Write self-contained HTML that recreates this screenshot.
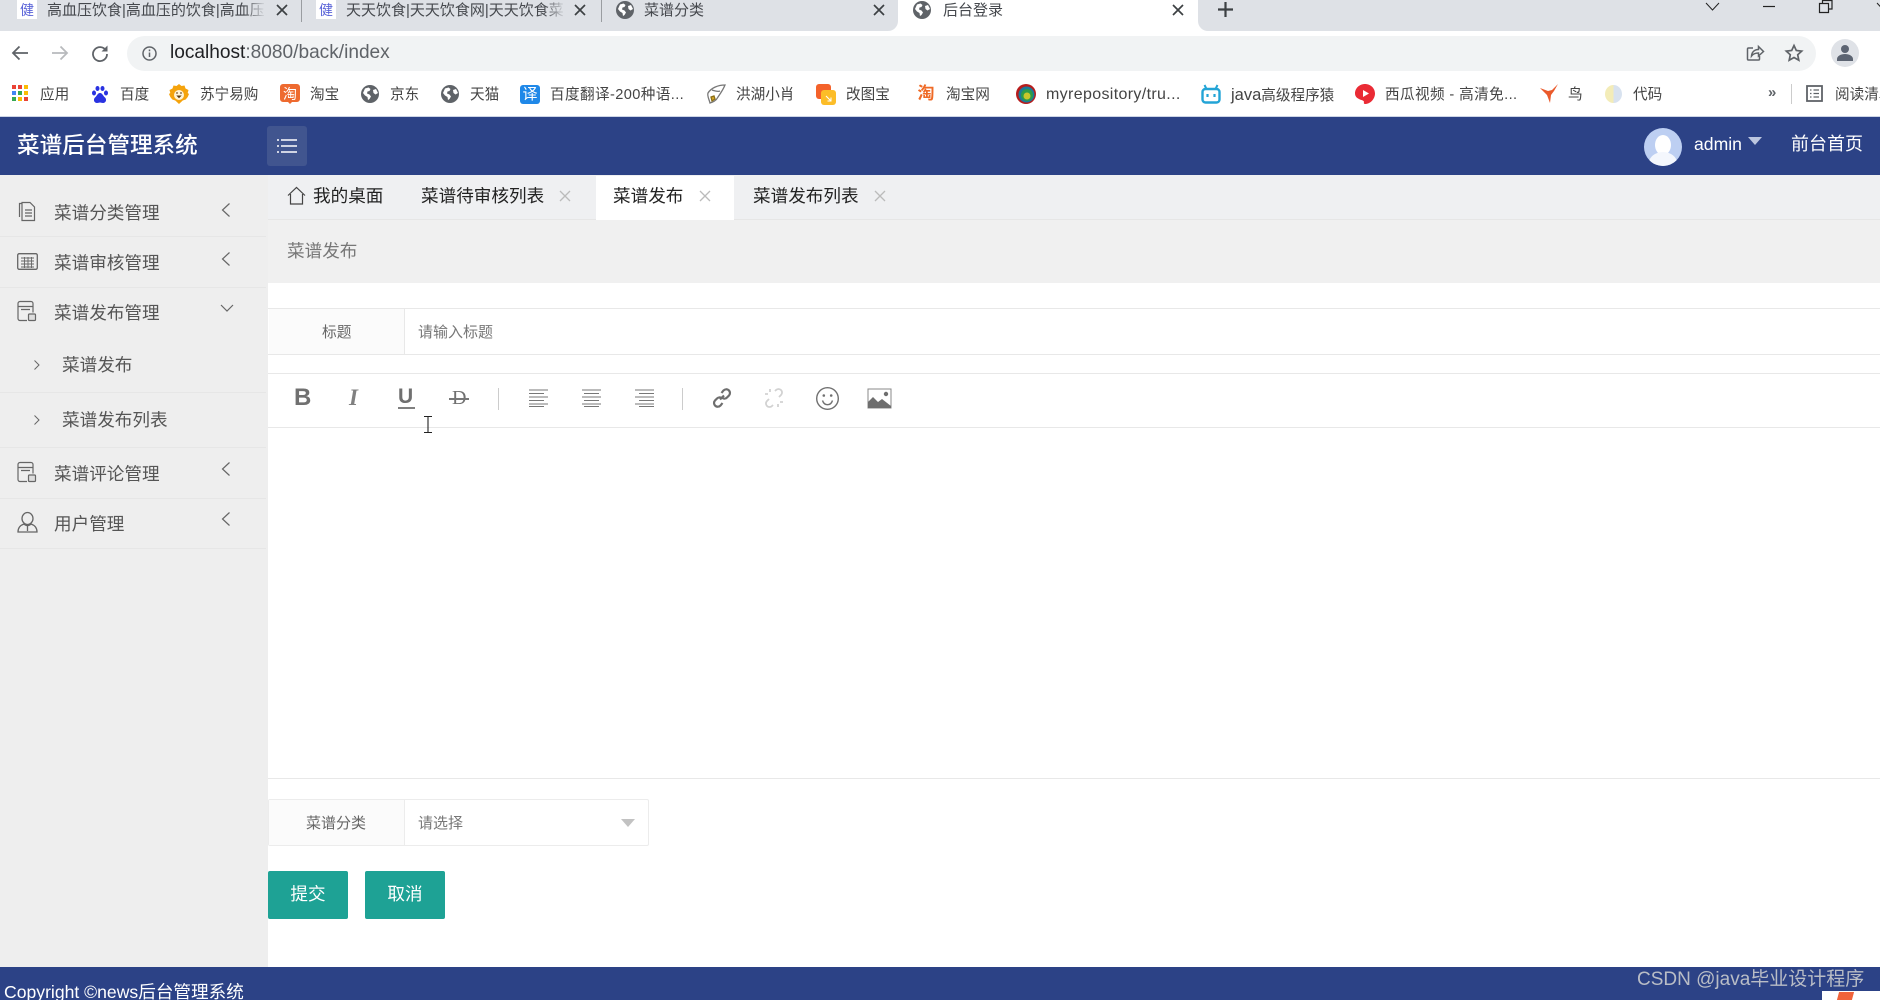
<!DOCTYPE html>
<html lang="zh-CN">
<head>
<meta charset="utf-8">
<title>后台登录</title>
<style>
html,body{margin:0;padding:0;width:1880px;height:1000px;overflow:hidden;background:#fff}
body{position:relative;font-family:"Liberation Sans","Noto Sans CJK SC","WenQuanYi Zen Hei",sans-serif}
.a,.t,svg.i{position:absolute}
.t{white-space:nowrap;line-height:24px;height:24px}
.bm{font-size:14.6px;color:#444;top:83px}
.tb{font-size:15px;color:#45484d;top:-1px}
.side{font-size:17.6px;color:#555}
.tab{font-size:17.6px;color:#222;top:184px}
svg.i{overflow:visible}
</style>
</head>
<body>
<svg width="0" height="0" style="position:absolute">
<defs>
<symbol id="globe" viewBox="0 0 18 18"><circle cx="9" cy="9" r="9" fill="#5f6368"/><path d="M4 3.500l3.500-1 2 1.500-1 2-2 .5-.5 2 2.500 1 1.500 2-1.500 2.500-1.500 1-.5-3-2.500-1.500-2-2.500zM12 5l3-1 2 4-2.500 1.500-2-1.500z" fill="#fff"/></symbol>
<symbol id="left" viewBox="0 0 12 16"><path d="M9.500 1.500L2.500 8l7 6.500" fill="none" stroke="#666" stroke-width="1.200"/></symbol>
<symbol id="x" viewBox="0 0 12 12"><path d="M1 1l10 10M11 1L1 11" stroke="#bbb" stroke-width="1.300" fill="none"/></symbol>
<symbol id="xd" viewBox="0 0 12 12"><path d="M1 1l10 10M11 1L1 11" stroke="#3c4043" stroke-width="1.700" fill="none"/></symbol>
</defs>
</svg>

<!-- browser tab strip -->
<div class="a" style="left:0;top:0;width:1880px;height:31px;background:#dee1e6"></div>
<div class="a" style="left:898px;top:0;width:300px;height:31px;background:#fff"></div>
<div class="a" style="left:888px;top:21px;width:10px;height:10px;background:#fff"></div>
<div class="a" style="left:878px;top:11px;width:20px;height:20px;background:#dee1e6;border-bottom-right-radius:10px"></div>
<div class="a" style="left:1198px;top:11px;width:20px;height:20px;background:#fff"></div>
<div class="a" style="left:1198px;top:11px;width:20px;height:20px;background:#dee1e6;border-bottom-left-radius:10px"></div>
<div class="a" style="left:17px;top:0;width:20px;height:19px;background:#fff;color:#5a64d8;font-size:14px;line-height:21px;text-align:center">健</div>
<div class="t tb" style="left:47px;width:217px;overflow:hidden">高血压饮食|高血压的饮食|高血压</div>
<div class="a" style="left:244px;top:0;width:22px;height:22px;background:linear-gradient(90deg,rgba(222,225,230,0),#dee1e6)"></div>
<svg class="i" style="left:276px;top:4px" width="12" height="12"><use href="#xd"/></svg>
<div class="a" style="left:301px;top:0;width:1px;height:22px;background:#9a9da1"></div>
<div class="a" style="left:316px;top:0;width:20px;height:19px;background:#fff;color:#5a64d8;font-size:14px;line-height:21px;text-align:center">健</div>
<div class="t tb" style="left:346px;width:220px;overflow:hidden">天天饮食|天天饮食网|天天饮食菜</div>
<div class="a" style="left:544px;top:0;width:22px;height:22px;background:linear-gradient(90deg,rgba(222,225,230,0),#dee1e6)"></div>
<svg class="i" style="left:574px;top:4px" width="12" height="12"><use href="#xd"/></svg>
<div class="a" style="left:601px;top:0;width:1px;height:22px;background:#9a9da1"></div>
<svg class="i" style="left:616px;top:1px" width="18" height="18"><use href="#globe"/></svg>
<div class="t tb" style="left:644px">菜谱分类</div>
<svg class="i" style="left:873px;top:4px" width="12" height="12"><use href="#xd"/></svg>
<svg class="i" style="left:913px;top:1px" width="18" height="18"><use href="#globe"/></svg>
<div class="t tb" style="left:943px">后台登录</div>
<svg class="i" style="left:1172px;top:4px" width="12" height="12"><use href="#xd"/></svg>
<svg class="i" style="left:1218px;top:2px" width="15" height="15"><path d="M7.500 0v15M0 7.500h15" stroke="#3c4043" stroke-width="2.200"/></svg>
<svg class="i" style="left:1680px;top:0" width="200" height="31" fill="none" stroke="#222" stroke-width="1">
<path d="M26 3l6.500 7 6.500-7"/><path d="M83 6.500h12" stroke-width="1.200"/><path d="M139.500 3.500h9v9h-9zM142.500 3V.5h9.500v8.500h-3.500" stroke-width="1.200"/><path d="M197 3l6 6.500"/>
</svg>

<!-- address bar -->
<svg class="i" style="left:11px;top:44px" width="18" height="18" fill="none" stroke="#5f6368" stroke-width="1.800"><path d="M17 9H2M8.500 2.500L2 9l6.500 6.500"/></svg>
<svg class="i" style="left:51px;top:44px" width="18" height="18" fill="none" stroke="#b8babd" stroke-width="1.800"><path d="M1 9h15M9.500 2.500L16 9l-6.500 6.500"/></svg>
<svg class="i" style="left:91px;top:44px" width="18" height="18" fill="none" stroke="#5f6368" stroke-width="1.800"><path d="M15 6.500A7 7 0 1 0 16 10"/><path d="M16.500 1.500v6h-6" stroke="none" fill="#5f6368"/></svg>
<div class="a" style="left:127px;top:36px;width:1689px;height:35px;background:#f1f3f4;border-radius:18px"></div>
<svg class="i" style="left:142px;top:46px" width="15" height="15"><circle cx="7.500" cy="7.500" r="6.500" fill="none" stroke="#5f6368" stroke-width="1.500"/><path d="M7.500 6.500v4.500M7.500 3.500v1.800" stroke="#5f6368" stroke-width="1.500"/></svg>
<div class="t" style="left:170px;top:41px;font-size:19.100px;color:#202124">localhost<span style="color:#5f6368">:8080/back/index</span></div>
<svg class="i" style="left:1746px;top:44px" width="18" height="18" fill="none" stroke="#5f6368" stroke-width="1.500"><path d="M7 4H2.500a1 1 0 0 0-1 1v10a1 1 0 0 0 1 1h10a1 1 0 0 0 1-1v-3"/><path d="M5.500 12c.3-4 3-6.500 7-6.500V2.500l5 5-5 4.500V9c-3 0-5.500 1-7 3z"/></svg>
<svg class="i" style="left:1785px;top:44px" width="18" height="18" fill="none" stroke="#5f6368" stroke-width="1.700"><path d="M9 1.500l2.300 5 5.400.6-4 3.700 1.100 5.400L9 13.500l-4.800 2.700 1.100-5.400-4-3.700 5.400-.6z"/></svg>
<div class="a" style="left:1831px;top:39px;width:28px;height:28px;border-radius:50%;background:#dfe2e7"></div>
<svg class="i" style="left:1837px;top:45px" width="16" height="16" fill="#5c6472"><circle cx="8" cy="4" r="4"/><path d="M0 16v-2c0-3 4-5 8-5s8 2 8 5v2z"/></svg>

<!-- bookmarks -->
<svg class="i" style="left:12px;top:85px" width="16" height="16">
<rect x="0" y="0" width="4" height="4" fill="#ea4335"/><rect x="6" y="0" width="4" height="4" fill="#ea4335"/><rect x="12" y="0" width="4" height="4" fill="#fbbc04"/>
<rect x="0" y="6" width="4" height="4" fill="#4285f4"/><rect x="6" y="6" width="4" height="4" fill="#34a853"/><rect x="12" y="6" width="4" height="4" fill="#fbbc04"/>
<rect x="0" y="12" width="4" height="4" fill="#34a853"/><rect x="6" y="12" width="4" height="4" fill="#fbbc04"/><rect x="12" y="12" width="4" height="4" fill="#ea4335"/>
</svg>
<div class="t bm" style="left:40px">应用</div>
<svg class="i" style="left:92px;top:86px" width="16" height="18" fill="#2932e1"><ellipse cx="2" cy="7" rx="2" ry="2.500"/><ellipse cx="5.500" cy="2.500" rx="2" ry="2.500"/><ellipse cx="10.500" cy="2.500" rx="2" ry="2.500"/><ellipse cx="14" cy="7" rx="2" ry="2.500"/><path d="M8 7c-2.500 0-3 3-5 4.500C1 13.500 2 17 5 17c1.500 0 2-.5 3-.5s1.500.5 3 .5c3 0 4-3.500 2-5.500C11 10 10.500 7 8 7z"/></svg>
<div class="t bm" style="left:120px">百度</div>
<svg class="i" style="left:169px;top:84px" width="20" height="20"><path d="M10 0l2.500 2 3-.5 1 3 3 1.500-.8 3 1.300 1-1.300 3-2 2.500-3 1-3.700 3.500-3.700-3.500-3-1-2-2.500L0 10l1.300-1-.8-3 3-1.500 1-3 3 .5z" fill="#f5a30c"/><circle cx="10" cy="11" r="5" fill="#fff3d6"/><path d="M7 9h2M11 9h2M8.500 12h3l-1.500 1.500z" stroke="#5a3a10" stroke-width="1"/></svg>
<div class="t bm" style="left:200px">苏宁易购</div>
<svg class="i" style="left:280px;top:84px" width="20" height="20"><path d="M3 0h14a3 3 0 0 1 3 3v12a3 3 0 0 1-3 3h-5l-2 2-2-2H3a3 3 0 0 1-3-3V3a3 3 0 0 1 3-3z" fill="#ee6a2f"/><text x="10" y="15" font-size="14" fill="#fff" text-anchor="middle" font-family="Noto Sans CJK SC">淘</text></svg>
<div class="t bm" style="left:310px">淘宝</div>
<svg class="i" style="left:361px;top:85px" width="18" height="18"><use href="#globe"/></svg>
<div class="t bm" style="left:390px">京东</div>
<svg class="i" style="left:441px;top:85px" width="18" height="18"><use href="#globe"/></svg>
<div class="t bm" style="left:470px">天猫</div>
<div class="a" style="left:520px;top:85px;width:20px;height:19px;background:#1f88e8;border-radius:3px;color:#fff;font-size:15px;line-height:19px;text-align:center">译</div>
<div class="t bm" style="left:550px;letter-spacing:.4px">百度翻译-200种语...</div>
<svg class="i" style="left:706px;top:84px" width="20" height="20" fill="none" stroke="#777" stroke-width="1.300"><path d="M19 1C12 1 5 4 2 9c-1 3 1 6 2 10 3-1 6-2 8-6 2-3 5-7 7-12z"/><path d="M5 13l3-1 1 3-3 2z" fill="#d7a928" stroke="#8a6d15"/><path d="M6 6c3 1 6 2 8 1"/></svg>
<div class="t bm" style="left:736px">洪湖小肖</div>
<div class="a" style="left:816px;top:84px;width:15px;height:15px;background:#f4622a;border-radius:3px"></div>
<div class="a" style="left:821px;top:90px;width:15px;height:15px;background:#fcbd28;border-radius:3px"></div>
<svg class="i" style="left:825px;top:95px" width="8" height="8" fill="none" stroke="#fff" stroke-width="1"><path d="M1 1l5 5M6 2.500V6H2.500"/></svg>
<div class="t bm" style="left:846px">改图宝</div>
<div class="a" style="left:916px;top:84px;width:20px;height:20px;color:#ef6a26;font-size:17px;font-weight:700;line-height:20px;text-align:center">淘</div>
<div class="t bm" style="left:946px">淘宝网</div>
<svg class="i" style="left:1016px;top:84px" width="20" height="20"><circle cx="10" cy="10" r="10" fill="#b71c1c"/><circle cx="10.500" cy="10.500" r="8" fill="#1b7a9a"/><circle cx="11" cy="11" r="6" fill="#2e9b48"/><circle cx="11" cy="12" r="3.500" fill="#c7c62c"/></svg>
<div class="t bm" style="left:1046px;font-size:16px;letter-spacing:.35px">myrepository/tru...</div>
<svg class="i" style="left:1201px;top:84px" width="20" height="20" fill="none" stroke="#23a4d6" stroke-width="2.400"><rect x="1.500" y="5" width="17" height="13.500" rx="3"/><path d="M5.500 5L3.500 1M14.500 5l2-4" stroke-width="2"/><path d="M6.500 10v3M13.500 10v3" stroke-width="2.200"/></svg>
<div class="t bm" style="left:1231px"><span style="font-size:16.500px">java</span>高级程序猿</div>
<svg class="i" style="left:1355px;top:84px" width="20" height="20"><path d="M10 0c5.500 0 10 4.200 10 9.500S15.500 20 10 20c-1 0-1.500-1-1-2 0-1-1-1.500-2.500-2C3 15 0 13 0 9.500 0 4.200 4.500 0 10 0z" fill="#ea2b35"/><path d="M8 6l6 3.500-6 3.500z" fill="#fff"/></svg>
<div class="t bm" style="left:1385px;letter-spacing:.4px">西瓜视频 - 高清免...</div>
<svg class="i" style="left:1539px;top:84px" width="20" height="20"><path d="M19 0l-6 6-4 1L1 4l7 7 3 8 1-8 3-4z" fill="#ea5a2b"/></svg>
<div class="t bm" style="left:1568px">鸟</div>
<svg class="i" style="left:1605px;top:85px" width="17" height="18"><path d="M8.500 0a8.500 9 0 0 0 0 18z" fill="#f3ecb8"/><path d="M8.500 0a8.500 9 0 0 1 0 18z" fill="#d8e2ef"/></svg>
<div class="t bm" style="left:1633px">代码</div>
<div class="t" style="left:1768px;top:81px;font-size:15px;color:#5f6368;font-weight:700">»</div>
<div class="a" style="left:1791px;top:84px;width:1px;height:20px;background:#ccc"></div>
<svg class="i" style="left:1806px;top:85px" width="17" height="17" fill="none" stroke="#5f6368" stroke-width="1.800"><rect x="1" y="1" width="15" height="15"/><path d="M4 5h1.500M7.500 5H13M4 8.500h1.500M7.500 8.500H13M4 12h1.500M7.500 12H13" stroke-width="1.300"/></svg>
<div class="t bm" style="left:1835px;width:45px;overflow:hidden">阅读清单</div>

<!-- app header -->
<div class="a" style="left:0;top:116px;width:1880px;height:1px;background:#cdd5e6"></div>
<div class="a" style="left:0;top:117px;width:1880px;height:58px;background:#2c4286"></div>
<div class="t" style="left:17px;top:132px;font-size:22.600px;color:#fff;font-weight:500;height:24px;line-height:28px">菜谱后台管理系统</div>
<div class="a" style="left:267px;top:126px;width:40px;height:40px;background:#41558f;border-radius:3px"></div>
<svg class="i" style="left:277px;top:139px" width="20" height="14" stroke="#fff" stroke-width="1.400"><path d="M4 1h16M4 7h16M4 13h16"/><path d="M0 1h2M0 7h2M0 13h2"/></svg>
<div class="a" style="left:1644px;top:128px;width:38px;height:38px;border-radius:50%;background:#bdcff2;overflow:hidden"><div class="a" style="left:11px;top:7px;width:16px;height:20px;border-radius:50%;background:#fff"></div><div class="a" style="left:5px;top:24px;width:28px;height:22px;border-radius:50%;background:#f4f7fd"></div></div>
<div class="t" style="left:1694px;top:132px;font-size:17.600px;color:#fff">admin</div>
<div class="a" style="left:1748px;top:137px;width:0;height:0;border-left:7px solid transparent;border-right:7px solid transparent;border-top:8px solid #bcc6df"></div>
<div class="t" style="left:1791px;top:132px;font-size:18px;color:#fff">前台首页</div>

<!-- sidebar -->
<div class="a" style="left:0;top:175px;width:268px;height:792px;background:#eee"></div>
<div class="a" style="left:0;top:236px;width:266px;height:1px;background:#e6e6e6"></div>
<div class="a" style="left:0;top:287px;width:266px;height:1px;background:#e6e6e6"></div>
<div class="a" style="left:0;top:392px;width:266px;height:1px;background:#e6e6e6"></div>
<div class="a" style="left:0;top:447px;width:266px;height:1px;background:#e6e6e6"></div>
<div class="a" style="left:0;top:498px;width:266px;height:1px;background:#e6e6e6"></div>
<div class="a" style="left:0;top:548px;width:266px;height:1px;background:#e6e6e6"></div>

<svg class="i" style="left:18px;top:202px" width="18" height="20" fill="none" stroke="#666" stroke-width="1.200"><path d="M4 1.500H1.500v13.500"/><path d="M4 4V.5h8l4.500 4.500V18.500H4z" fill="#eee"/><path d="M7 8h7M7 11h7M7 14h7"/></svg>
<div class="t side" style="left:54px;top:201px">菜谱分类管理</div>
<svg class="i" style="left:220px;top:202px" width="12" height="16"><use href="#left"/></svg>

<svg class="i" style="left:17px;top:253px" width="21" height="18" fill="none" stroke="#666" stroke-width="1.300"><rect x=".7" y=".7" width="19.600" height="15.600" rx="1.500"/><path d="M4 5h13M4 8h13M4 11h13M4 14h13M7.500 4v11M11 4v11M14.500 4v11" stroke-width=".9"/></svg>
<div class="t side" style="left:54px;top:251px">菜谱审核管理</div>
<svg class="i" style="left:220px;top:251px" width="12" height="16"><use href="#left"/></svg>

<svg class="i" style="left:17px;top:301px" width="20" height="21" fill="none" stroke="#666" stroke-width="1.200"><path d="M10 19.500H3a2 2 0 0 1-2-2V2.500a2 2 0 0 1 2-2h11a2 2 0 0 1 2 2v9"/><path d="M1 5.500h15M4 8.500h9"/><rect x="11.500" y="13" width="7" height="6.500" rx="1" fill="#ddd"/></svg>
<div class="t side" style="left:54px;top:301px">菜谱发布管理</div>
<svg class="i" style="left:220px;top:303px" width="14" height="10" fill="none" stroke="#666" stroke-width="1.200"><path d="M1 2l6 6 6-6"/></svg>

<svg class="i" style="left:33px;top:359px" width="8" height="12" fill="none" stroke="#666" stroke-width="1"><path d="M1.500 1.500L6 6l-4.500 4.500"/></svg>
<div class="t side" style="left:62px;top:353px">菜谱发布</div>
<svg class="i" style="left:33px;top:414px" width="8" height="12" fill="none" stroke="#666" stroke-width="1"><path d="M1.500 1.500L6 6l-4.500 4.500"/></svg>
<div class="t side" style="left:62px;top:408px">菜谱发布列表</div>

<svg class="i" style="left:17px;top:462px" width="20" height="21" fill="none" stroke="#666" stroke-width="1.200"><path d="M10 19.500H3a2 2 0 0 1-2-2V2.500a2 2 0 0 1 2-2h11a2 2 0 0 1 2 2v9"/><path d="M1 5.500h15M4 8.500h9"/><rect x="11.500" y="13" width="7" height="6.500" rx="1" fill="#ddd"/></svg>
<div class="t side" style="left:54px;top:462px">菜谱评论管理</div>
<svg class="i" style="left:220px;top:461px" width="12" height="16"><use href="#left"/></svg>

<svg class="i" style="left:17px;top:512px" width="21" height="21" fill="none" stroke="#666" stroke-width="1.300"><ellipse cx="10.500" cy="6.500" rx="5.500" ry="6"/><path d="M7 12c-3 1-6 3-6 8h19c0-5-3-7-6-8-1 1-2 1.500-3.500 1.500S8 13 7 12z"/><path d="M10.500 14v5"/></svg>
<div class="t side" style="left:54px;top:512px">用户管理</div>
<svg class="i" style="left:220px;top:511px" width="12" height="16"><use href="#left"/></svg>

<!-- tabs -->
<div class="a" style="left:268px;top:175px;width:1612px;height:44px;background:#eff0f2"></div>
<div class="a" style="left:268px;top:219px;width:1612px;height:1px;background:#e6e6e6"></div>
<svg class="i" style="left:287px;top:186px" width="19" height="19" fill="none" stroke="#444" stroke-width="1.200"><path d="M1 9.500L9.500 1.500 18 9.500M3.500 8v10h12V8"/></svg>
<div class="t tab" style="left:313px">我的桌面</div>
<div class="t tab" style="left:421px">菜谱待审核列表</div>
<svg class="i" style="left:559px;top:190px" width="12" height="12"><use href="#x"/></svg>
<div class="a" style="left:596px;top:176px;width:138px;height:44px;background:#fff"></div>
<div class="t tab" style="left:613px">菜谱发布</div>
<svg class="i" style="left:699px;top:190px" width="12" height="12"><use href="#x"/></svg>
<div class="t tab" style="left:753px">菜谱发布列表</div>
<svg class="i" style="left:874px;top:190px" width="12" height="12"><use href="#x"/></svg>

<!-- breadcrumb -->
<div class="a" style="left:268px;top:220px;width:1612px;height:63px;background:#f0f0f0"></div>
<div class="t" style="left:287px;top:239px;font-size:17.600px;color:#777">菜谱发布</div>

<!-- title row -->
<div class="a" style="left:268px;top:308px;width:1612px;height:47px;border-top:1px solid #e8e8e8;border-bottom:1px solid #e8e8e8;box-sizing:border-box"></div>
<div class="a" style="left:269px;top:309px;width:135px;height:45px;background:#fbfbfb;border-right:1px solid #e8e8e8"></div>
<div class="t" style="left:322px;top:320px;font-size:14.700px;line-height:26px;color:#666">标题</div>
<div class="t" style="left:418px;top:320px;font-size:15px;line-height:26px;color:#777">请输入标题</div>

<!-- editor toolbar -->
<div class="a" style="left:268px;top:373px;width:1612px;height:55px;border-top:1px solid #e8e8e8;border-bottom:1px solid #e8e8e8;box-sizing:border-box"></div>
<div class="t" style="left:294px;top:386px;font-size:24px;font-weight:700;color:#707070">B</div>
<div class="t" style="left:349px;top:386px;font-size:23px;font-weight:700;font-style:italic;color:#808080;font-family:'Liberation Serif',serif">I</div>
<div class="t" style="left:398px;top:385px;font-size:21px;font-weight:700;color:#707070">U</div>
<div class="a" style="left:398px;top:407px;width:17px;height:1.500px;background:#808080"></div>
<div class="t" style="left:452px;top:386px;font-size:20px;color:#707070;font-family:'Liberation Serif',serif">D</div>
<div class="a" style="left:449px;top:398px;width:20px;height:1.500px;background:#777"></div>
<div class="a" style="left:498px;top:388px;width:1px;height:22px;background:#ccc"></div>
<svg class="i" style="left:529px;top:389px" width="19" height="18" stroke="#777" stroke-width="1.100"><path d="M0 1h19M0 4.500h15M0 8h19M0 11.500h15M0 15h19M0 17.500h15"/></svg>
<svg class="i" style="left:582px;top:389px" width="19" height="18" stroke="#777" stroke-width="1.100"><path d="M0 1h19M2 4.500h15M0 8h19M2 11.500h15M0 15h19M2 17.500h15"/></svg>
<svg class="i" style="left:635px;top:389px" width="19" height="18" stroke="#777" stroke-width="1.100"><path d="M0 1h19M4 4.500h15M0 8h19M4 11.500h15M0 15h19M4 17.500h15"/></svg>
<div class="a" style="left:682px;top:388px;width:1px;height:22px;background:#ccc"></div>
<svg class="i" style="left:712px;top:388px" width="20" height="20" fill="none" stroke="#6e6e6e" stroke-width="2.200"><path d="M8 11.500l4-4"/><path d="M9.500 5l2-2.500a3.500 3.500 0 0 1 5.500 5l-2 2a3.500 3.500 0 0 1-4.500.5"/><path d="M10.500 15l-2 2.500a3.500 3.500 0 0 1-5.500-5l2-2A3.500 3.500 0 0 1 9.500 10"/></svg>
<svg class="i" style="left:764px;top:388px" width="20" height="20" fill="none" stroke="#d2d2d2" stroke-width="1.800"><path d="M11 3l1-1a3.500 3.500 0 0 1 5 5l-2 2M9 17l-1 1a3.500 3.500 0 0 1-5-5l2-2M1 6h3M6 1v3M19 14h-3M14 19v-3"/></svg>
<svg class="i" style="left:816px;top:387px" width="23" height="23" fill="none" stroke="#707070" stroke-width="1.400"><circle cx="11.500" cy="11.500" r="10.800"/><circle cx="7.800" cy="8.500" r="1.300" fill="#707070" stroke="none"/><circle cx="15.200" cy="8.500" r="1.300" fill="#707070" stroke="none"/><path d="M6.500 13.500c1 3 3 4.200 5 4.200s4-1.200 5-4.200"/></svg>
<svg class="i" style="left:868px;top:389px" width="23" height="19"><path d="M0 0h23v19H0z" fill="#fff" stroke="#888" stroke-width="1"/><path d="M0 19V13l5-5 5 5 4-3 9 7v2z" fill="#6e6e6e"/><circle cx="18" cy="5" r="2.200" fill="#6e6e6e"/></svg>
<svg class="i" style="left:423px;top:416px" width="10" height="17" fill="none" stroke="#222" stroke-width="1.100"><path d="M1 .5h8M1 16.500h8M5 .5v16"/></svg>

<!-- editor bottom -->
<div class="a" style="left:268px;top:778px;width:1612px;height:1px;background:#e8e8e8"></div>

<!-- category -->
<div class="a" style="left:268px;top:799px;width:381px;height:47px;border:1px solid #ececec;box-sizing:border-box;border-radius:2px"></div>
<div class="a" style="left:269px;top:800px;width:135px;height:45px;background:#fbfbfb;border-right:1px solid #ececec"></div>
<div class="t" style="left:306px;top:811px;font-size:15px;line-height:26px;color:#666">菜谱分类</div>
<div class="t" style="left:418px;top:811px;font-size:15px;line-height:26px;color:#777">请选择</div>
<div class="a" style="left:621px;top:819px;width:0;height:0;border-left:7px solid transparent;border-right:7px solid transparent;border-top:8px solid #c2c2c2"></div>

<!-- buttons -->
<div class="a" style="left:268px;top:871px;width:80px;height:48px;background:#1ea295;border-radius:2px;color:#fff;font-size:17.600px;line-height:47px;text-align:center">提交</div>
<div class="a" style="left:365px;top:871px;width:80px;height:48px;background:#1ea295;border-radius:2px;color:#fff;font-size:17.600px;line-height:47px;text-align:center">取消</div>

<!-- footer -->
<div class="a" style="left:0;top:967px;width:1880px;height:33px;background:#2c4286"></div>
<div class="t" style="left:4px;top:980px;font-size:17.600px;color:#fff">Copyright ©news后台管理系统</div>
<div class="t" style="left:1637px;top:968px;font-size:19px;color:#b9bdc6">CSDN @java毕业设计程序</div>
<div class="a" style="left:1822px;top:991px;width:58px;height:9px;background:#fff"></div>
<div class="a" style="left:1838px;top:992px;width:15px;height:8px;background:#f0633a;transform:skewX(-15deg)"></div>
</body>
</html>
